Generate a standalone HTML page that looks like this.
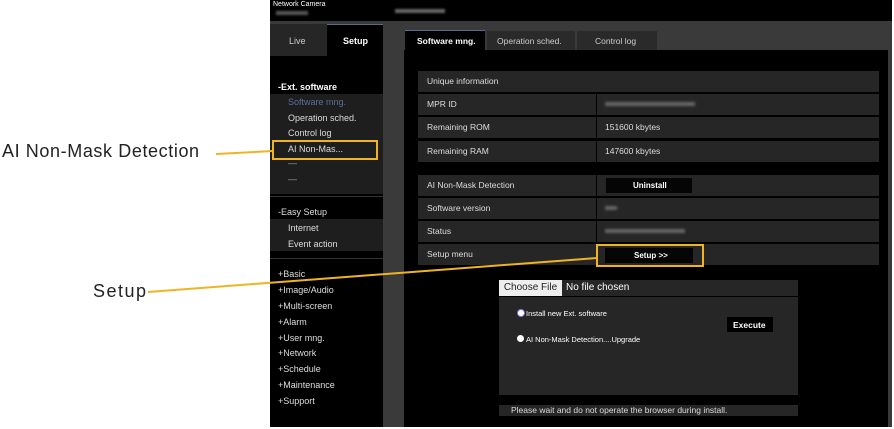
<!DOCTYPE html><html><head><style>
body{margin:0;width:894px;height:429px;background:#fff;position:relative;overflow:hidden;font-family:"Liberation Sans",Arial,sans-serif}
.a{position:absolute}
.t{color:#fff;font-size:9px}
.row{position:absolute;left:418px;width:461px;height:21px;background:#262626}
.row span{position:absolute;left:9px;top:5px;color:#ddd;font-size:8.5px}
.row i{position:absolute;left:178px;top:0;width:1px;height:21px;background:#000}
.row b{position:absolute;left:187px;top:5px;color:#ddd;font-size:8.5px;font-weight:bold}
.blur{position:absolute;left:187px;top:8px;height:4px;background:#666;filter:blur(1.2px)}
.sb{position:absolute;left:279px;color:#ddd;font-size:9px}
</style></head><body>
<div class="a" style="left:270px;top:0;width:622px;height:427px;background:#3a3a3a"></div>
<div class="a" style="left:270px;top:0;width:622px;height:21px;background:#000"></div>
<div class="a t" style="left:273px;top:1px;font-size:7px">Network Camera</div>
<div class="a" style="left:276px;top:11px;width:32px;height:4px;background:#555;filter:blur(1px)"></div>
<div class="a" style="left:395px;top:9px;width:50px;height:4px;background:#666;filter:blur(1px)"></div>
<div class="a" style="left:270px;top:24px;width:113px;height:403px;background:#000"></div>
<div class="a" style="left:270px;top:24px;width:57px;height:32px;background:#262626"></div>
<div class="a" style="left:327px;top:24px;width:56px;height:1px;background:#5a6a8a"></div>
<div class="a t" style="left:289px;top:36px;color:#ccc">Live</div>
<div class="a t" style="left:343px;top:36px;font-weight:bold">Setup</div>
<div class="a t" style="left:278px;top:82px;font-weight:bold">-Ext. software</div>
<div class="a" style="left:270px;top:94px;width:113px;height:100px;background:#1e1e1e"></div>
<div class="sb" style="left:288px;top:97px;color:#5c6e9a">Software mng.</div>
<div class="sb" style="left:288px;top:113px">Operation sched.</div>
<div class="sb" style="left:288px;top:128px">Control log</div>
<div class="sb" style="left:288px;top:144px">AI Non-Mas...</div>
<div class="sb" style="left:288px;top:158px;color:#999">—</div>
<div class="sb" style="left:288px;top:174px;color:#999">—</div>
<div class="a" style="left:270px;top:196px;width:113px;height:1px;background:#333"></div>
<div class="sb" style="left:278px;top:207px">-Easy Setup</div>
<div class="a" style="left:270px;top:219px;width:113px;height:32px;background:#1e1e1e"></div>
<div class="sb" style="left:288px;top:223px">Internet</div>
<div class="sb" style="left:288px;top:239px">Event action</div>
<div class="a" style="left:270px;top:258px;width:113px;height:1px;background:#333"></div>
<div class="sb" style="left:278px;top:269px">+Basic</div>
<div class="sb" style="left:278px;top:285px">+Image/Audio</div>
<div class="sb" style="left:278px;top:301px">+Multi-screen</div>
<div class="sb" style="left:278px;top:317px">+Alarm</div>
<div class="sb" style="left:278px;top:333px">+User mng.</div>
<div class="sb" style="left:278px;top:348px">+Network</div>
<div class="sb" style="left:278px;top:364px">+Schedule</div>
<div class="sb" style="left:278px;top:380px">+Maintenance</div>
<div class="sb" style="left:278px;top:396px">+Support</div>
<div class="a" style="left:405px;top:30px;width:80px;height:21px;background:#000;border-top:1px solid #5a6a8a"></div>
<div class="a t" style="left:417px;top:36px;font-weight:bold;font-size:8.5px">Software mng.</div>
<div class="a" style="left:487px;top:31px;width:88px;height:19px;background:#2a2a2a"></div>
<div class="a t" style="left:497px;top:36px;color:#ccc;font-size:8.5px">Operation sched.</div>
<div class="a" style="left:577px;top:31px;width:80px;height:19px;background:#2a2a2a"></div>
<div class="a t" style="left:595px;top:36px;color:#ccc;font-size:8.5px">Control log</div>
<div class="a" style="left:404px;top:50px;width:484px;height:377px;background:#000"></div>
<div class="row" style="top:71px"><span>Unique information</span></div>
<div class="row" style="top:94px"><span>MPR ID</span><i></i><div class="blur" style="width:90px"></div></div>
<div class="row" style="top:117px"><span>Remaining ROM</span><i></i><b style="font-weight:normal">151600 kbytes</b></div>
<div class="row" style="top:141px"><span>Remaining RAM</span><i></i><b style="font-weight:normal">147600 kbytes</b></div>
<div class="row" style="top:175px"><span>AI Non-Mask Detection</span><i></i></div>
<div class="a" style="left:606px;top:178px;width:86px;height:15px;background:#050505"></div>
<div class="a t" style="left:633px;top:181px;font-weight:bold;font-size:8px">Uninstall</div>
<div class="row" style="top:198px"><span>Software version</span><i></i><div class="blur" style="width:12px"></div></div>
<div class="row" style="top:221px"><span>Status</span><i></i><div class="blur" style="width:80px"></div></div>
<div class="row" style="top:244px"><span>Setup menu</span><i></i></div>
<div class="a" style="left:605px;top:248px;width:88px;height:15px;background:#050505"></div>
<div class="a t" style="left:634px;top:251px;font-weight:bold;font-size:8px">Setup &gt;&gt;</div>
<div class="a" style="left:596px;top:244px;width:108px;height:23px;border:2px solid #f0b323;box-sizing:border-box"></div>
<div class="a" style="left:499px;top:280px;width:299px;height:115px;background:#262626"></div>
<div class="a" style="left:499px;top:280px;width:63px;height:16px;background:#eee;color:#222;font-size:10px;line-height:16px;text-align:center">Choose File</div>
<div class="a t" style="left:566px;top:282px;font-size:10px">No file chosen</div>
<div class="a" style="left:499px;top:296px;width:299px;height:1px;background:#000"></div>
<div class="a" style="left:517px;top:309px;width:6px;height:6px;border-radius:50%;background:#fff;border:1px solid #7a7ae0"></div>
<div class="a t" style="left:526px;top:309px;font-size:7.5px">Install new Ext. software</div>
<div class="a" style="left:517px;top:335px;width:7px;height:7px;border-radius:50%;background:#fff"></div>
<div class="a t" style="left:526px;top:335px;font-size:7.5px">AI Non-Mask Detection....Upgrade</div>
<div class="a" style="left:727px;top:317px;width:46px;height:15px;background:#000"></div>
<div class="a t" style="left:733px;top:320px;font-weight:bold;font-size:8.5px">Execute</div>
<div class="a" style="left:499px;top:405px;width:299px;height:11px;background:#262626"></div>
<div class="a t" style="left:511px;top:405px;font-size:8.5px;color:#ddd">Please wait and do not operate the browser during install.</div>
<div class="a" style="left:272px;top:140px;width:106px;height:20px;border:2px solid #f0b323;box-sizing:border-box"></div>
<svg class="a" style="left:0;top:0" width="894" height="429"><line x1="216" y1="154" x2="273" y2="151" stroke="#f0b323" stroke-width="2"/><line x1="148" y1="292" x2="597" y2="258" stroke="#f0b323" stroke-width="2"/></svg>
<div class="a" style="left:2px;top:141px;font-size:18px;letter-spacing:0.6px;color:#222;white-space:nowrap">AI Non-Mask Detection</div>
<div class="a" style="left:93px;top:281px;font-size:18px;letter-spacing:1.5px;color:#222">Setup</div>
</body></html>
